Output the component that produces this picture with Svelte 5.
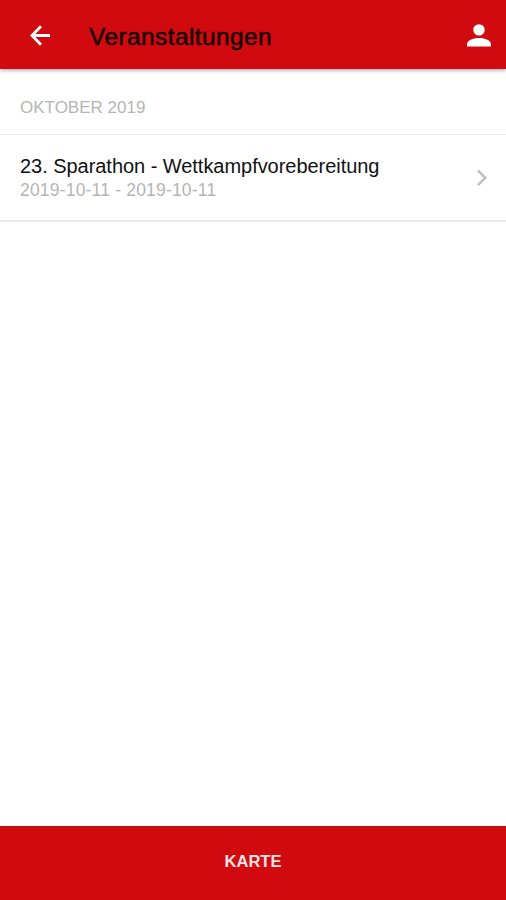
<script>
	let month = $state("Oktober 2019");
	let events = $state([
		{ title: "23. Sparathon - Wettkampfvorebereitung", start: "2019-10-11", end: "2019-10-11" }
	]);
</script>

<div class="page">
	<header>
		<button class="back" aria-label="Zurück">
			<svg width="21" height="21" viewBox="0 0 21 21">
				<path d="M20 10.5H2.5M11 1.2L1.9 10.5L11 19.8" fill="none" stroke="#fff" stroke-width="2.8" />
			</svg>
		</button>
		<h1>Veranstaltungen</h1>
		<button class="profile" aria-label="Profil">
			<svg width="24" height="24" viewBox="0 0 24 24">
				<circle cx="12" cy="5.9" r="5.7" fill="#fff" />
				<path d="M0 22.5V20.5C0 16.2 6 14 12 14S24 16.2 24 20.5V22.5Z" fill="#fff" />
			</svg>
		</button>
	</header>

	<main>
		<h2>{month}</h2>
		{#each events as event}
			<a class="event" href="#event">
				<div>
					<p class="title">{event.title}</p>
					<p class="date">{event.start} - {event.end}</p>
				</div>
				<svg width="12" height="18" viewBox="0 0 12 18">
					<path d="M2 1.5L9.3 8.8L2 16.1" fill="none" stroke="#c0c0c0" stroke-width="2.5" />
				</svg>
			</a>
		{/each}
	</main>

	<button class="map-btn">Karte</button>
</div>

<style>
	:global(body) {
		margin: 0;
		background: #fff;
	}

	.page {
		display: flex;
		flex-direction: column;
		height: 100vh;
		font-family: "Liberation Sans", Arial, sans-serif;
	}

	button {
		padding: 0;
		border: none;
		background: none;
		font-family: inherit;
	}

	svg {
		display: block;
	}

	h1, h2, p {
		margin: 0;
		font-weight: 400;
		white-space: nowrap;
	}

	header {
		display: flex;
		align-items: center;
		box-sizing: border-box;
		height: 69px;
		padding: 2px 15.5px 0 30px;
		background: #d10a10;
		box-shadow: 0 1px 4px rgba(0, 0, 0, 0.4);
	}

	h1 {
		flex: 1;
		margin-left: 38px;
		padding-top: 3px;
		font-size: 24.5px;
		line-height: 30px;
		letter-spacing: 0.4px;
		color: #160102;
		-webkit-text-stroke: 0.5px #160102;
	}

	main {
		flex: 1;
	}

	h2 {
		box-sizing: border-box;
		height: 66px;
		padding: 28px 20px 0;
		border-bottom: 1px solid #ececec;
		font-size: 17px;
		line-height: 22px;
		text-transform: uppercase;
		color: #b5b5b5;
	}

	.event {
		display: flex;
		align-items: center;
		justify-content: space-between;
		box-sizing: border-box;
		height: 87px;
		padding: 0 18px 0 20px;
		border-bottom: 2px solid #e9e9e9;
		text-decoration: none;
	}

	.title {
		font-size: 20px;
		line-height: 24px;
		letter-spacing: -0.04px;
		color: #111;
	}

	.date {
		font-size: 17.5px;
		line-height: 24px;
		letter-spacing: 0.19px;
		color: #b5b5b5;
	}

	.map-btn {
		height: 74px;
		padding-bottom: 3px;
		background: #d10a10;
		color: #fbe3e4;
		font-size: 16.5px;
		font-weight: 700;
		text-transform: uppercase;
	}
</style>
